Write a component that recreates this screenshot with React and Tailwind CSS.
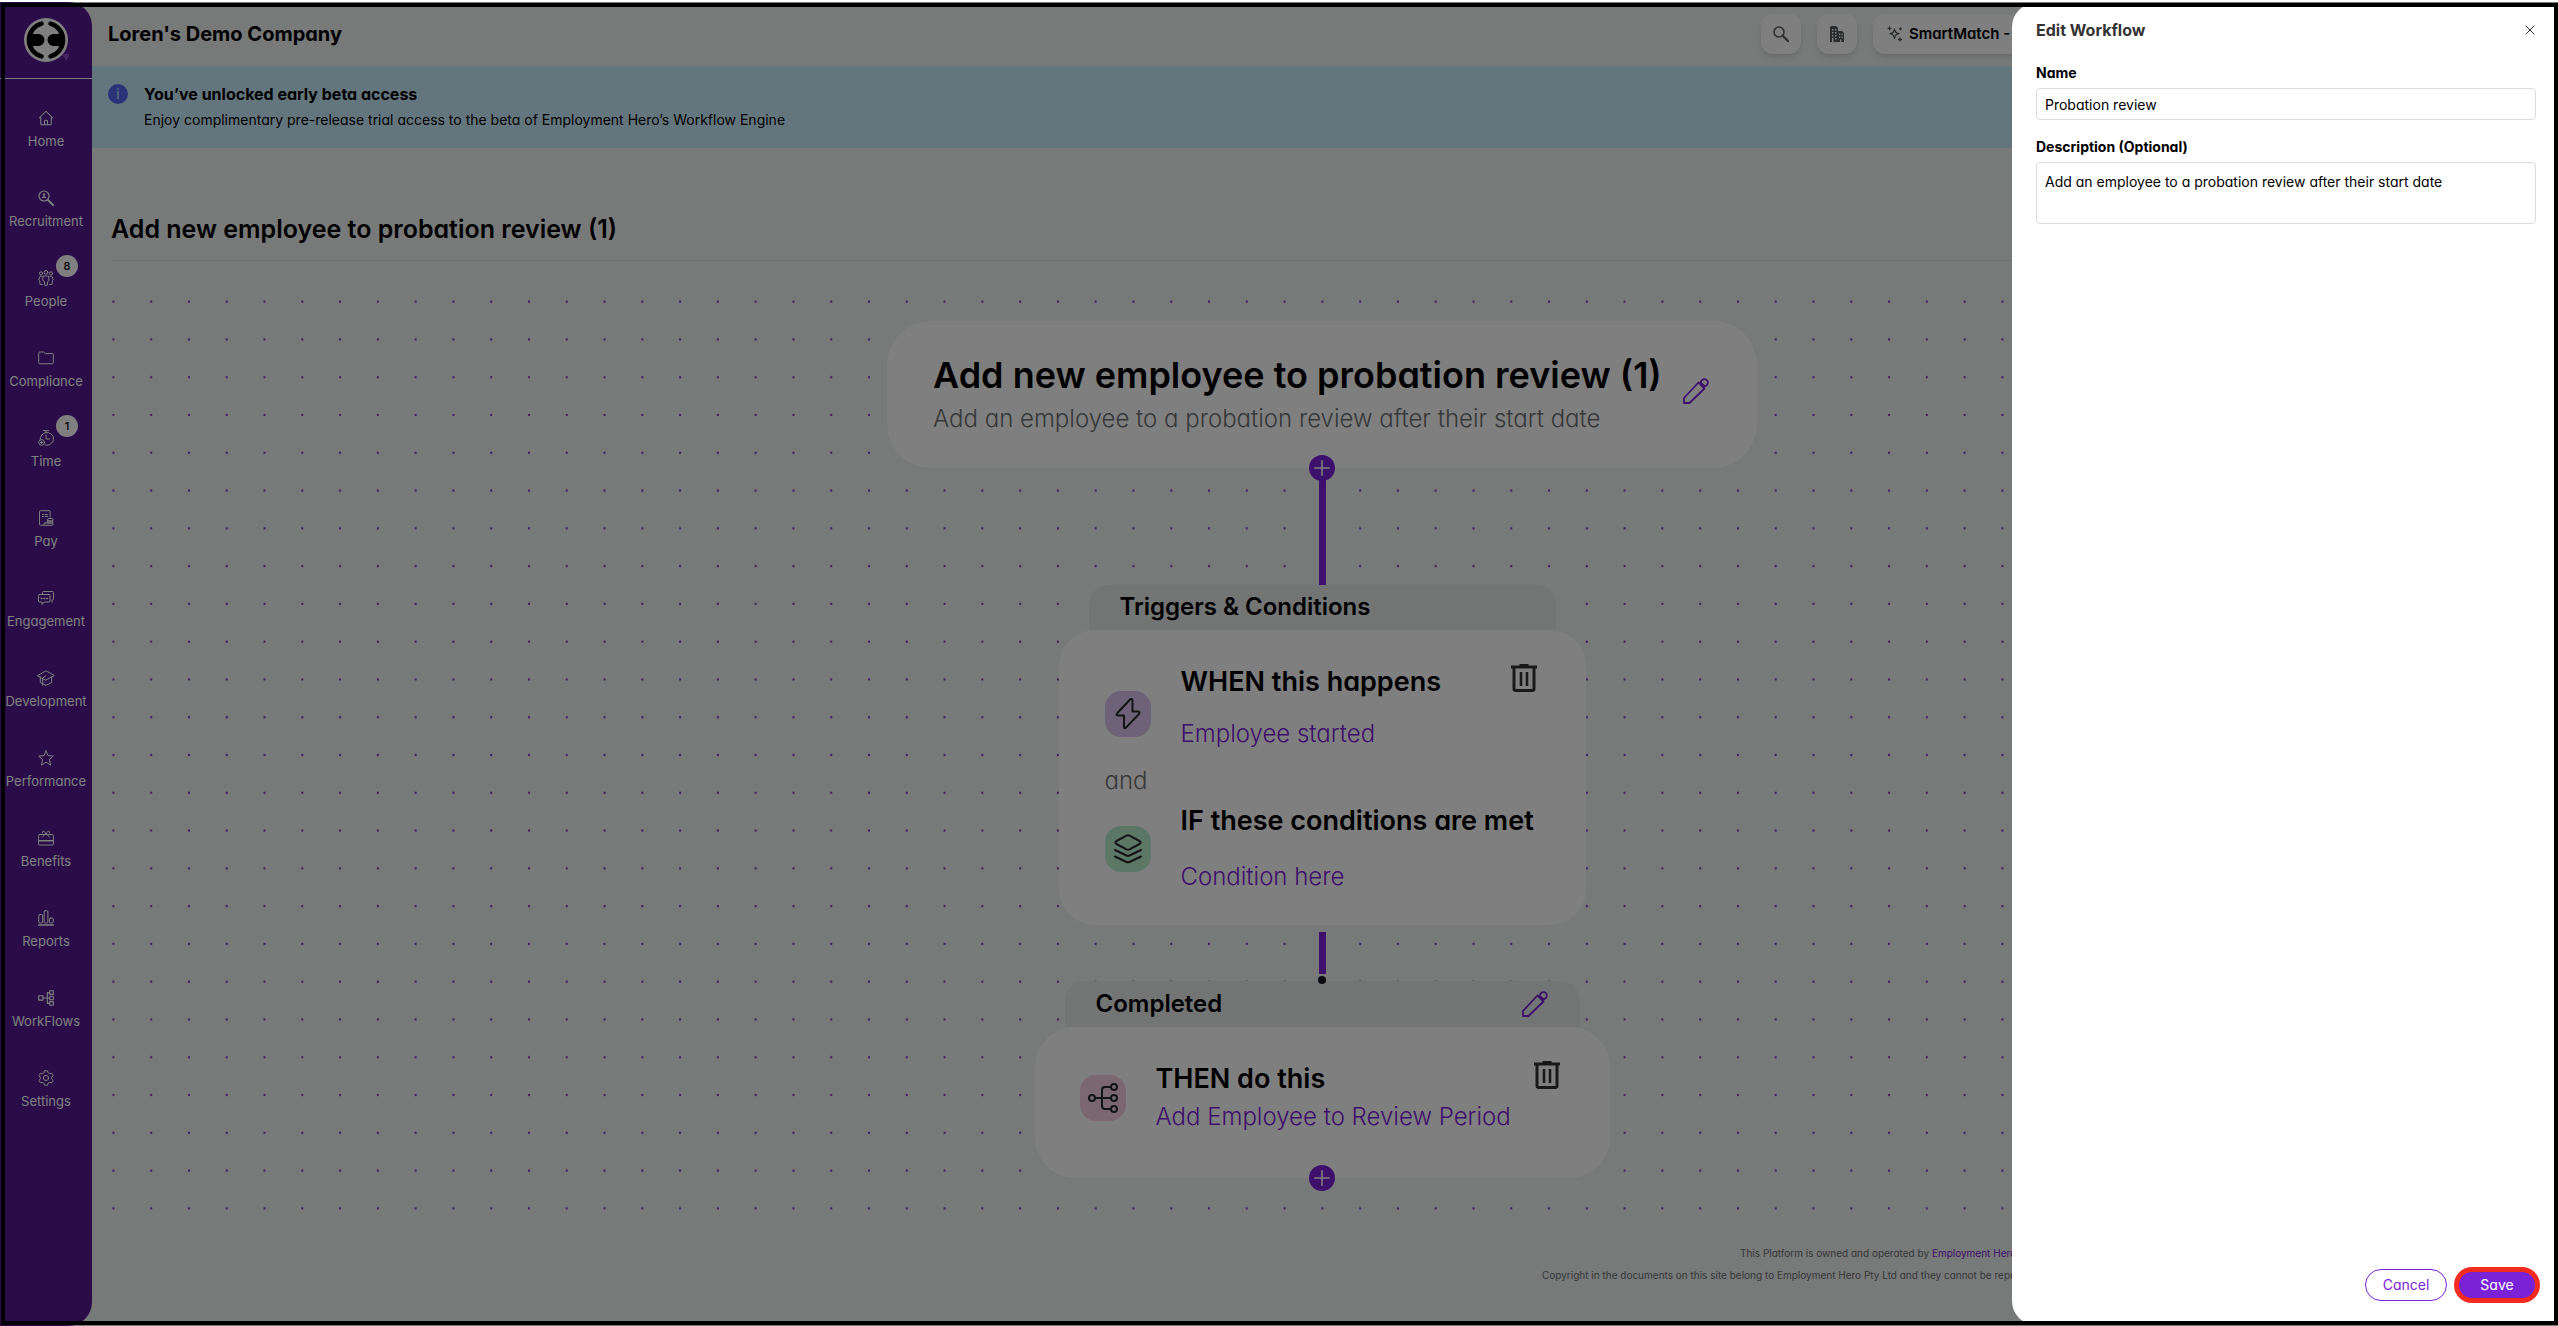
import React, { useState } from "react";
import { HiOutlineHome } from "react-icons/hi";

const icon = {
  width: 16,
  height: 16,
  viewBox: "0 0 16 16",
  fill: "none",
  stroke: "currentColor",
  strokeWidth: 1,
  strokeLinecap: "round",
  strokeLinejoin: "round",
  "aria-hidden": true,
};

/* ---------- Sidebar icons ---------- */

function RecruitmentIcon() {
  return (
    <svg {...icon}>
      <circle cx="6" cy="6" r="5" strokeWidth="1.2" />
      <circle cx="6" cy="4.5" r="1.2" fill="currentColor" stroke="none" />
      <path d="M3.8 8c0-2.4 4.4-2.4 4.4 0z" fill="currentColor" stroke="none" />
      <path d="M10 10l5 5" strokeWidth="2" />
    </svg>
  );
}

function PeopleIcon() {
  return (
    <svg {...icon}>
      <circle cx="8" cy="2.4" r="1.9" />
      <circle cx="3" cy="3.4" r="1.6" />
      <circle cx="13" cy="3.4" r="1.6" />
      <path d="M5.5 6h5l.5 4.5-1.3.8-.4 4H6.7l-.4-4-1.3-.8z" />
      <path d="M4 6.3H2L.7 10l1 .8.4 3.7h2.2M12 6.3h2l1.300 3.7-1 .8-.4 3.7h-2.200" />
    </svg>
  );
}

function ComplianceIcon() {
  return (
    <svg {...icon}>
      <path d="M.7 3a1 1 0 0 1 1-1h4l1.600 1.600h7a1 1 0 0 1 1 1v8.200a1 1 0 0 1-1 1H1.700a1 1 0 0 1-1-1z" />
    </svg>
  );
}

function TimeIcon() {
  return (
    <svg {...icon}>
      <path d="M5.500.6h5M8 .6v2.200M4.200 4.500A6.400 6.400 0 1 1 7 15M2.400 9V7.500l1.800-3" />
      <path d="M8 5v4h3.500" />
      <circle cx="3.600" cy="12.400" r="2.900" />
      <path d="M3.600 11.200v2.400M2.400 12.400h2.400" />
    </svg>
  );
}

function PayIcon() {
  return (
    <svg {...icon}>
      <path d="M6 15.300H2.500a1 1 0 0 1-1-1V1.700a1 1 0 0 1 1-1h8.600a1 1 0 0 1 1 1V7" />
      <path d="M4.500 4.500h1M7 4.500h2.500M4.500 6.500h1M7 6.500h2.500" />
      <rect x="9.500" y="8.500" width="5.500" height="2.500" rx="1" />
      <rect x="9" y="11" width="6" height="2" rx="1" />
      <rect x="6" y="13" width="9" height="2.300" rx="1" />
    </svg>
  );
}

function EngagementIcon() {
  return (
    <svg {...icon}>
      <path d="M1.500 4.500h9.500a1 1 0 0 1 1 1v5.500a1 1 0 0 1-1 1H6l-2 2.500V12H1.500a1 1 0 0 1-1-1V5.500a1 1 0 0 1 1-1z" />
      <path d="M4.500 4.300V2.500a1 1 0 0 1 1-1h9a1 1 0 0 1 1 1V9a1 1 0 0 1-1 1h-.5v2.200" />
      <path d="M3.200 8.500h.8M5.900 8.500h.8M8.600 8.500h.8" strokeWidth="1.300" />
    </svg>
  );
}

function DevelopmentIcon() {
  return (
    <svg {...icon} width="18" viewBox="-1 0 18 16">
      <path d="M-.3 5.500L8 .8l8.300 4.700L8 10z" />
      <path d="M2.300 7v5.500L8 15.300l5.700-2.800V7M8 5.700L4.700 8v7.300" />
    </svg>
  );
}

function PerformanceIcon() {
  return (
    <svg {...icon}>
      <path d="M8 .9l2.100 4.700 5.200.5-3.900 3.500 1.200 5.500L8 12.200l-4.600 2.900 1.200-5.500L.7 6.100l5.200-.5z" />
    </svg>
  );
}

function BenefitsIcon() {
  return (
    <svg {...icon}>
      <rect x=".6" y="4.500" width="14.800" height="10.500" rx="1" />
      <path d="M.6 10.700h14.800" strokeWidth="1.400" />
      <path d="M8 3.500C6 0 3.500.8 4.500 3M8 3.500C10 0 12.500.8 11.500 3M8 3.500L4.500 7M8 3.500L11.500 7" />
    </svg>
  );
}

function ReportsIcon() {
  return (
    <svg {...icon}>
      <rect x=".8" y="4.500" width="3.800" height="8.500" rx="1" />
      <rect x="6.100" y=".8" width="3.800" height="12.200" rx="1" />
      <rect x="11.400" y="8" width="3.800" height="5" rx="1" />
      <path d="M.5 15h15" strokeWidth="1.400" />
    </svg>
  );
}

function WorkflowsIcon() {
  return (
    <svg {...icon} strokeWidth="1.100">
      <rect x=".7" y="5.800" width="4.300" height="4.300" />
      <rect x="11.700" y=".8" width="3.600" height="3.600" />
      <rect x="11.700" y="6.200" width="3.600" height="3.600" />
      <rect x="11.700" y="11.600" width="3.600" height="3.600" />
      <path d="M5 8h6.700M11.500 2.600H9.300v10.800h2.200" />
    </svg>
  );
}

function SettingsIcon() {
  return (
    <svg {...icon}>
      <circle cx="8" cy="8" r="2.600" />
      <path d="M6.500.8h3l.5 2 1.500.9 2-.6 1.600 2.600-1.500 1.500v1.600l1.500 1.500-1.600 2.600-2-.6-1.500.9-.5 2h-3l-.5-2-1.500-.9-2 .6L.9 10.300l1.500-1.500V7.200L.9 5.700l1.600-2.600 2 .6L6 2.800z" />
    </svg>
  );
}

/* ---------- Workflow icons ---------- */

function PencilIcon() {
  return (
    <svg {...icon} width="26" height="26" viewBox="0 0 26 26" strokeWidth="1.800">
      <path d="M1 25v-5L15.500 4.500l6 6L6.500 25z" />
      <path d="M17.500 4.500c1-3 4-4.500 6.300-2.300 2.200 2.300.7 5.300-2.300 6.300z" />
    </svg>
  );
}

function TrashIcon() {
  return (
    <svg {...icon} width="26" height="28" viewBox="0 0 26 28" strokeWidth="3" strokeLinecap="butt">
      <path d="M0 3h26M8.500 1.500h9" />
      <path d="M3 3v22a1.500 1.500 0 0 0 1.500 1.500h17A1.500 1.500 0 0 0 23 25V3" />
      <path d="M10 8v14M16 8v14" strokeWidth="2.600" />
    </svg>
  );
}

function BoltIcon() {
  return (
    <svg {...icon} width="26" height="32" viewBox="0 0 26 32" strokeWidth="2">
      <path d="M15 1.500L2 15.500c-1 1.300-.3 2 1 2h6v11.500c0 1.500 1 1.800 2 .6L24 16c1-1.300.3-2.500-1-2.500h-5.500V2.500c0-1.600-1.500-2-2.500-1z" />
    </svg>
  );
}

function LayersIcon() {
  return (
    <svg {...icon} width="28" height="30" viewBox="0 0 28 30" strokeWidth="2">
      <path d="M12.500 1.700L2.500 7c-1.500 1-1.500 2 0 3l10 5.300c1 .5 2 .5 3 0l10-5.300c1.500-1 1.500-2 0-3l-10-5.300c-1-.5-2-.5-3 0z" />
      <path d="M1 16l11.500 5.500c1 .5 2 .5 3 0L27 16M1 22.500L12.500 28c1 .5 2 .5 3 0L27 22.500" />
    </svg>
  );
}

function BranchIcon() {
  return (
    <svg {...icon} width="30" height="30" viewBox="0 0 30 30" strokeWidth="2">
      <circle cx="4" cy="15" r="3" />
      <circle cx="26" cy="4" r="3" />
      <circle cx="26" cy="15" r="3" />
      <circle cx="26" cy="26" r="3" />
      <path d="M7 15h16M23 4h-6c-2 0-3 1-3 3v16c0 2 1 3 3 3h6" />
    </svg>
  );
}

function Logo() {
  return (
    <svg width="46" height="46" viewBox="0 0 46 46" role="img" aria-label="Employment Hero">
      <circle cx="23" cy="23" r="22" fill="#fff" />
      <g fill="none" stroke="#000" strokeWidth="4.500" strokeLinecap="round">
        <path d="M18.500 6.600a17 17 0 0 0 0 32.800" />
        <path d="M27.500 6.600a17 17 0 0 1 0 32.800" />
      </g>
      <path d="M6 14c3 3.500 6 3 9.500 3a6 6 0 0 1 0 12c-3.500 0-6.500-.5-9.500 3-2-5-2-13 0-18z" />
      <path d="M40 14c-3 3.500-6 3-9.500 3a6 6 0 0 0 0 12c3.500 0 6.500-.5 9.500 3 2-5 2-13 0-18z" />
      <path d="M39 37h8l-4 7z" fill="#8c4ac4" />
    </svg>
  );
}

const navItems = [
  { label: "Home", Icon: () => <HiOutlineHome size={18} strokeWidth={1.4} /> },
  { label: "Recruitment", Icon: RecruitmentIcon },
  { label: "People", Icon: PeopleIcon, badge: 8 },
  { label: "Compliance", Icon: ComplianceIcon },
  { label: "Time", Icon: TimeIcon, badge: 1 },
  { label: "Pay", Icon: PayIcon },
  { label: "Engagement", Icon: EngagementIcon },
  { label: "Development", Icon: DevelopmentIcon },
  { label: "Performance", Icon: PerformanceIcon },
  { label: "Benefits", Icon: BenefitsIcon },
  { label: "Reports", Icon: ReportsIcon },
  { label: "WorkFlows", Icon: WorkflowsIcon },
  { label: "Settings", Icon: SettingsIcon },
];

function Sidebar() {
  return (
    <aside className="w-[92px] shrink-0 rounded-r-3xl bg-[#541890] text-white">
      <div className="flex h-[77px] items-center justify-center border-b border-white">
        <Logo />
      </div>
      <nav className="flex flex-col pt-[10px]">
        {navItems.map(({ label, Icon, badge }) => (
          <a
            key={label}
            href="#"
            className="relative flex h-20 flex-col items-center justify-center gap-[7px] text-[13px] leading-4"
          >
            <span className="flex h-4 items-center">
              <Icon />
            </span>
            {label}
            {badge && (
              <span className="absolute top-1.5 left-14 flex h-[22px] w-[22px] items-center justify-center rounded-full bg-white text-[11px] font-medium text-black">
                {badge}
              </span>
            )}
          </a>
        ))}
      </nav>
    </aside>
  );
}

function TopBar() {
  return (
    <header className="flex h-16 items-center justify-between pl-4">
      <h1 className="text-xl font-bold">Loren's Demo Company</h1>
      <div className="flex w-[797px] gap-4 text-[#55585a]">
        <button aria-label="Search" className="flex h-10 w-10 items-center justify-center rounded-xl bg-white shadow-md">
          <svg {...icon}>
            <circle cx="6" cy="6" r="5" strokeWidth="1.500" />
            <path d="M10 10l5 5" strokeWidth="2.200" />
          </svg>
        </button>
        <button aria-label="Company" className="flex h-10 w-10 items-center justify-center rounded-xl bg-white shadow-md">
          <svg {...icon}>
            <path
              fillRule="evenodd"
              stroke="none"
              fill="currentColor"
              d="M2 0h5l2 2v3h4l2 2v9H1V1zM3 3v1.500h1.500V3zm3 0v1.500h1.500V3zM3 6v1.500h1.500V6zm3 0v1.500h1.500V6zM3 9v1.500h1.500V9zm3 0v1.500h1.500V9zm-3 3v4h1.500v-4zm3 0v1.500h1.500V12zm4-4.500V9h1.200V7.500zm2.500 0V9h1.200V7.500zm-2.500 3V12h1.200v-1.500zm2.500 0V12h1.200v-1.500zm-1.500 3V16h1.300v-2.500z"
            />
          </svg>
        </button>
        <button className="flex h-10 w-[280px] items-center gap-1.5 rounded-xl bg-white px-3.5 text-[15px] font-semibold shadow-md">
          <svg {...icon} strokeWidth="1.300">
            <path d="M7.500 3c.6 3.200 1.300 4 4.500 4.700-3.200.7-3.900 1.500-4.500 4.800C6.900 9.200 6.200 8.400 3 7.700 6.200 7 6.900 6.200 7.500 3z" />
            <path d="M2.500.8v3M1 2.300h3M13.500 1.800v2M12.500 2.800h2M13 12v3M11.500 13.500h3" />
          </svg>
          <span className="text-black">SmartMatch - On</span>
        </button>
      </div>
    </header>
  );
}

function BetaBanner() {
  return (
    <section className="flex h-[82px] gap-4 bg-[#c8ecfa] px-4 pt-[18px]">
      <span className="flex h-5 w-5 shrink-0 items-center justify-center rounded-full bg-[#5666f0] text-sm leading-5 text-[#c8ecfa]">
        i
      </span>
      <div>
        <h2 className="text-base leading-5 font-bold">You’ve unlocked early beta access</h2>
        <p className="mt-1.5 text-sm leading-5">
          Enjoy complimentary pre-release trial access to the beta of Employment Hero’s Workflow Engine
        </p>
      </div>
    </section>
  );
}

function DotGrid() {
  return (
    <svg className="absolute inset-0 h-full w-full" aria-hidden="true">
      <defs>
        <pattern id="dots" x="-16.500" y="2.800" width="37.780" height="37.780" patternUnits="userSpaceOnUse">
          <circle cx="18.900" cy="18.900" r="1.150" fill="#8038bd" />
        </pattern>
      </defs>
      <rect width="100%" height="100%" fill="url(#dots)" />
    </svg>
  );
}

function AddStep() {
  return (
    <button
      aria-label="Add step"
      className="absolute -bottom-[13px] left-1/2 z-10 flex h-[26px] w-[26px] -translate-x-1/2 items-center justify-center rounded-full bg-[#7a22d6] text-white"
    >
      <svg {...icon} strokeWidth="1.600">
        <path d="M8 .8v14.400M.8 8h14.400" />
      </svg>
    </button>
  );
}

function Step({ tint, Icon, title, value, className = "" }) {
  return (
    <div className="flex items-center gap-[30px]">
      <span className={`flex h-[46px] w-[46px] shrink-0 items-center justify-center rounded-2xl text-[#26282a] ${tint}`}>
        <Icon />
      </span>
      <div className={`flex flex-col ${className}`}>
        <h3 className="text-[27px] leading-8 font-semibold whitespace-nowrap">{title}</h3>
        <a href="#" className="text-2xl leading-8 font-light whitespace-nowrap text-[#7a22d6]">
          {value}
        </a>
      </div>
    </div>
  );
}

function WorkflowCanvas({ title, description }) {
  return (
    <section className="relative flex h-[946px] flex-col items-center pt-[41px]">
      <DotGrid />

      <div className="relative flex h-[147px] w-[870px] items-center justify-between rounded-[44px] bg-white pr-12 pl-[46px]">
        <div>
          <h2 className="text-[36px] leading-[48px] font-semibold whitespace-nowrap">{title}</h2>
          <p className="text-2xl leading-10 font-light whitespace-nowrap text-[#6c7072]">{description}</p>
        </div>
        <button aria-label="Edit workflow" className="mb-2 text-[#7a22d6]">
          <PencilIcon />
        </button>
        <AddStep />
      </div>

      <div className="relative h-[117px] w-[7px] bg-[#7a22d6]" />

      <div className="relative h-[45px] w-[467px] rounded-t-[20px] bg-[#e6ebe9] pl-[31px]">
        <h3 className="text-2xl leading-[44px] font-semibold">Triggers &amp; Conditions</h3>
      </div>
      <div className="relative flex h-[295px] w-[527px] flex-col justify-between rounded-[36px] bg-white pt-9 pr-[49px] pb-8 pl-[46px]">
        <div className="flex items-start justify-between">
          <Step tint="mt-3 bg-[#dcc4f0]" Icon={BoltIcon} title="WHEN this happens" value="Employee started" className="gap-5" />
          <button aria-label="Delete trigger" className="-mt-0.5 text-[#333]">
            <TrashIcon />
          </button>
        </div>
        <p className="pt-1.5 text-2xl leading-8 font-light text-[#6c7072]">and</p>
        <Step tint="bg-[#b8efcc]" Icon={LayersIcon} title="IF these conditions are met" value="Condition here" className="gap-6" />
      </div>

      <div className="relative mt-[7px] h-[42px] w-[7px] bg-[#7a22d6]" />
      <div className="relative z-10 mt-0.5 -mb-[3px] h-2 w-2 rounded-full bg-[#161622]" />

      <div className="relative flex h-[46px] w-[515px] items-center justify-between rounded-t-[20px] bg-[#e6ebe9] pr-8 pl-[31px]">
        <h3 className="text-2xl leading-[44px] font-semibold">Completed</h3>
        <button aria-label="Edit completed step" className="text-[#7a22d6]">
          <PencilIcon />
        </button>
      </div>
      <div className="relative flex h-[151px] w-[575px] items-start justify-between rounded-[40px] bg-white pt-9 pr-[50px] pl-[45px]">
        <Step tint="bg-[#f4cfdf]" Icon={BranchIcon} title="THEN do this" value="Add Employee to Review Period" className="gap-1.5" />
        <button aria-label="Delete action" className="-mt-0.5 text-[#333]">
          <TrashIcon />
        </button>
        <AddStep />
      </div>
    </section>
  );
}

function Footer() {
  return (
    <footer className="flex flex-col items-start pt-4 pl-[1450px] text-[10px] leading-[22px] whitespace-nowrap text-[#6c7072]">
      <p className="pl-[198px]">
        This Platform is owned and operated by{" "}
        <a href="#" className="text-[#7a22d6]">
          Employment Hero
        </a>
      </p>
      <p>Copyright in the documents on this site belong to Employment Hero Pty Ltd and they cannot be reproduced</p>
    </footer>
  );
}

function EditDrawer() {
  const [name, setName] = useState("Probation review");
  const [description, setDescription] = useState("Add an employee to a probation review after their start date");

  return (
    <div
      role="dialog"
      aria-labelledby="drawer-title"
      className="absolute top-[3px] right-0 bottom-px flex w-[546px] flex-col rounded-l-3xl bg-white pr-[22px] pl-6"
    >
      <div className="flex h-[54px] items-center justify-between">
        <h2 id="drawer-title" className="text-base font-bold text-[#333]">
          Edit Workflow
        </h2>
        <button aria-label="Close" className="p-px text-[#333]">
          <svg {...icon} width="10" height="10" viewBox="0 0 10 10">
            <path d="M1 1l8 8M9 1L1 9" />
          </svg>
        </button>
      </div>

      <label htmlFor="name" className="mt-1.5 text-sm leading-5 font-bold">
        Name
      </label>
      <input
        id="name"
        value={name}
        onChange={(e) => setName(e.target.value)}
        className="mt-[5px] h-8 rounded border border-[#dcdcdc] px-2 text-sm"
      />

      <label htmlFor="description" className="mt-[17px] text-sm leading-5 font-bold">
        Description (Optional)
      </label>
      <textarea
        id="description"
        value={description}
        onChange={(e) => setDescription(e.target.value)}
        className="mt-[5px] h-[62px] resize-none rounded border border-[#dcdcdc] px-2 py-[9px] text-sm"
      />

      <div className="-mr-1 mt-auto mb-[22px] flex items-center justify-end gap-[7px]">
        <button className="h-8 w-[82px] rounded-full border border-[#7a22d6] text-sm text-[#7a22d6]">Cancel</button>
        <button className="h-9 w-[86px] rounded-full border-[5px] border-[#f42c20] bg-[#7a22d6] text-sm text-white">
          Save
        </button>
      </div>
    </div>
  );
}

export default function App() {
  const title = "Add new employee to probation review (1)";

  return (
    <div className="relative min-h-screen overflow-hidden bg-white pt-0.5 font-[Inter,'Liberation_Sans',sans-serif] text-black [font-feature-settings:'cv11']">
      <div className="flex min-h-[1324px] bg-[#f0f3f2]">
        <Sidebar />
        <div className="min-w-0 flex-1">
          <TopBar />
          <BetaBanner />
          <main className="pr-[25px] pl-[19px]">
            <h2 className="border-b border-[#dde0df] pt-[65px] pb-[15px] text-[25px] leading-8 font-semibold">{title}</h2>
            <div className="pt-[19px]">
              <WorkflowCanvas title={title} description="Add an employee to a probation review after their start date" />
            </div>
          </main>
          <Footer />
        </div>
      </div>

      {/* dimmed backdrop */}
      <div className="absolute inset-x-0 top-0.5 bottom-0 z-20 bg-black/50" />
      <div className="absolute inset-0 z-30">
        <EditDrawer />
      </div>
      <div className="pointer-events-none absolute top-[3px] right-0 bottom-px left-px z-40 border-4 border-black" />
    </div>
  );
}
